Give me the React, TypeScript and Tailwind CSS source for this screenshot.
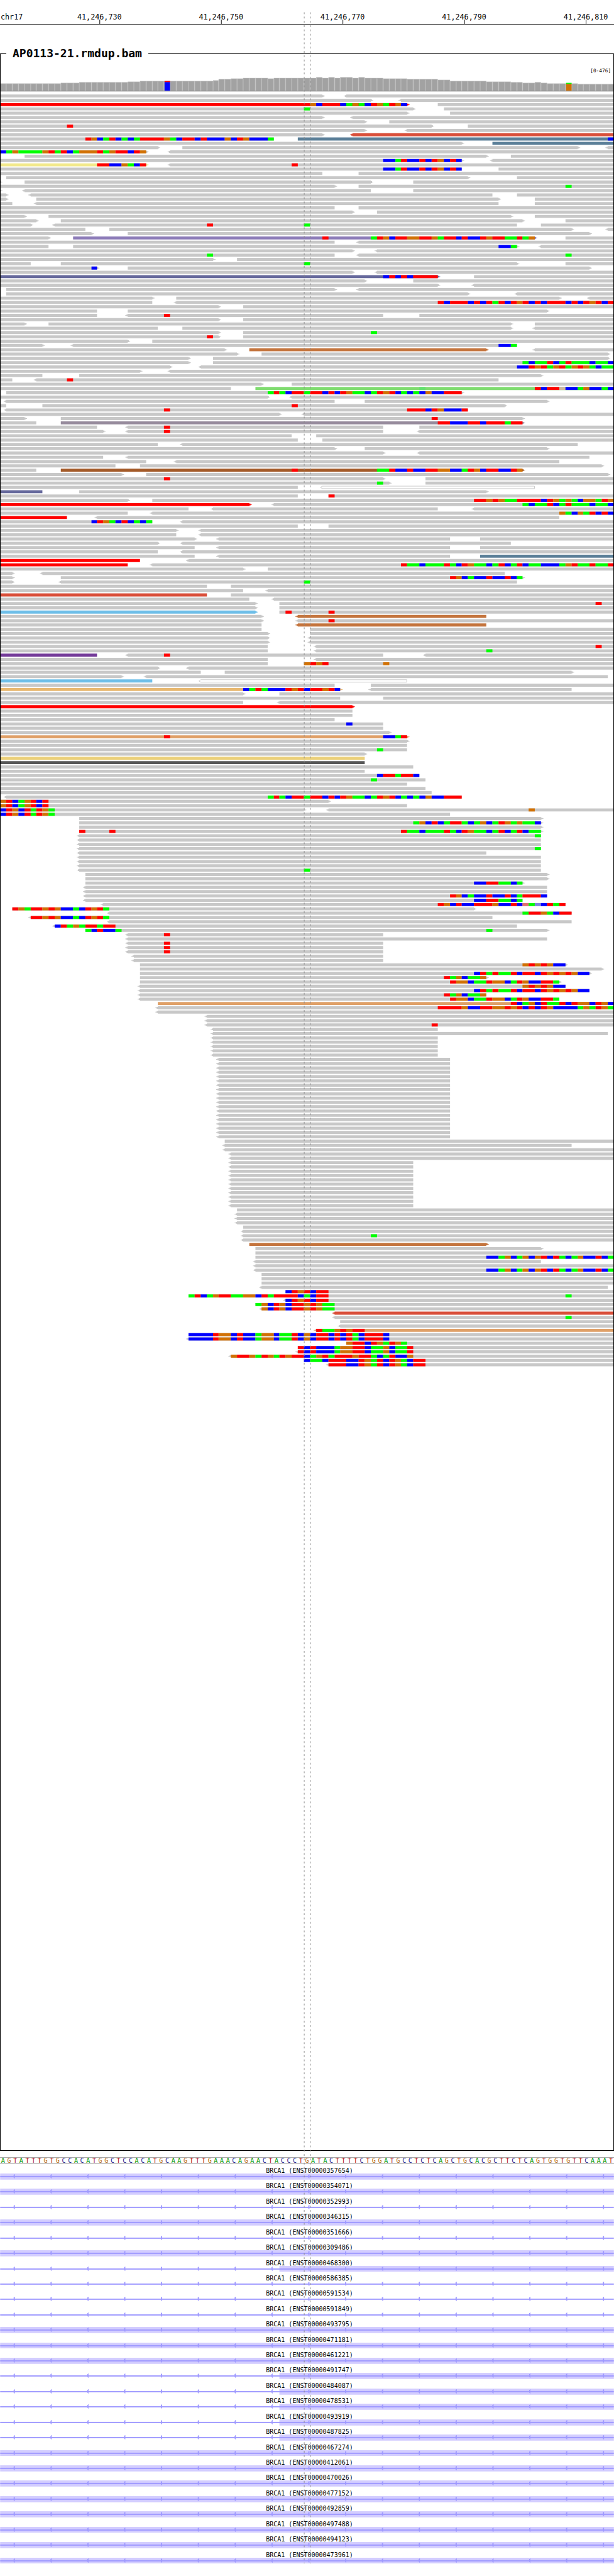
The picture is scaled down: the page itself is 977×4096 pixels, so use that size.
import React from "react";

/** Width of one reference base in plot units (the plot is 1000 units wide). */
const BASE = 9.9;
const bx = (b: number) => Math.round(b * BASE);

const GREY = "#c8c8c8";

const READ_COLORS: Record<string, string> = {
  red: "#ff0000",
  tomato: "#d94f3a",
  steel: "#5b7f98",
  khaki: "#f2e98b",
  lilac: "#8c7bb8",
  slate: "#66699c",
  copper: "#c4743d",
  green: "#80dc70",
  mauve: "#968a9c",
  brown: "#a35a28",
  sky: "#6fbfe8",
  purple: "#733a99",
  sand: "#e8b870",
  tan: "#dfa068",
  straw: "#ebd07a",
  dark: "#575757",
};

const MISMATCH_COLORS: Record<string, string> = {
  A: "#00ff00",
  C: "#0000ff",
  G: "#d17105",
  T: "#ff0000",
  a: "#64e070",
  t: "#e07070",
  c: "#8080e0",
  n: "#ccb6a0",
};

const LETTER_COLORS: Record<string, string> = {
  A: "text-[#009600]",
  C: "text-[#16168c]",
  G: "text-[#b86a10]",
  T: "text-[#b01010]",
};

const M38 = "ACAATCATAAACAAC";
const M45 = "ATACTTATTCTCTGAACATGTCACACGCCTTT";
const M37 = "CCAGCAGCGTCTACAGCCTCA";
const M55 = "CCCCTGGCTCCAGGCAATCGCTTCTCTACTTTC";
const M58 = "TCTCCCAGGTTCAAGCAAT";
const M41 = "CTATAATCTTCTGTGTGCC";
const M43 = "TGGCAATGGCATGCCTTA";

/**
 * One string per pileup row, tokens separated by spaces:
 *   start-end        a read, "<" before or ">" after for its strand arrow
 *   ...:name         read colour
 *   ~start-end       low mapping quality (hollow) read
 *   @pos=BASES       mismatching bases
 */
const ROWS: string[] = [
  "0-53> <57-101",
  "0-61> <66-101",
  "0-67>:red 72-101 @51=GCTTTCAGACTGATGC",
  "0-68> 73-101 @50=A",
  "0-67> 74-101",
  "0-53> <58-101",
  "0-60> 64-101",
  "0-71> 77-101 @11=T",
  "0-60> <67-101",
  "0-53> <58-101:tomato",
  "0-45 49-101:steel @14=TGCATCACATTTTGACTTCTCCCGCTGCCCA @100=C",
  "0-76> 81-101:steel",
  "0-26> 30-95> <100-101",
  "0-24> <28-101 @0=CAGAAAAGTATCAGGGTAGTTCTG",
  "4-80> 84-101",
  "0-76> <81-101 @63=CCATCCTCTGCTC",
  "0-24>:khaki <28-101 @16=TTCCGACT @48=T",
  "0-76 82-101 @63=CCATCCTCTGCTC",
  "0-53 59-101",
  "1-77> 85-101",
  "0-0> 4-61> 68-101",
  "0-55> 59-101 @93=A",
  "0-0> <4-61 68-101",
  "0-1> <5-81 85-101",
  "0-1> 6-82> 88-101",
  "0-2 <6-82 88-101",
  "0-55 59-101",
  "0-58> 62-101",
  "0-4> 8-84> 88-101",
  "0-6> 10-86> 93-101",
  "0-5> <9-85 89-101 @34=T @50=A",
  "0-14 18-94> <100-101",
  "0-15> 21-97>",
  "0-8> 12-88>:lilac 93-101 @53=T @61=ATGCTTGGTTGATTCTCCTGTTAATAG",
  "0-55 <59-101",
  "0-8 12-85> <89-101 @82=CCA",
  "0-58> <62-101",
  "0-55 <59-101 @34=A @93=A",
  "0-35> 39-101",
  "0-5 10-85> 93-101 @50=A",
  "0-16> 21-97> @15=C",
  "0-58> <62-101",
  "0-72>:slate 78-101 @63=CTCTCTTTT",
  "0-60> 68-101",
  "0-72> <78-101",
  "1-55> <59-101",
  "1-77> <85-101",
  "0-25> 29-92> <97-101",
  "0-25 <29-101 @72=TCTTTCTCTATCTGTCTCTTTCTCTGTCT",
  "0-36> 40-101",
  "0-16 21-90>",
  "0-16 <21-63 69-101 @27=T",
  "0-36> 40-101",
  "0-4> 8-84> 88-101",
  "0-26 30-84> <88-101",
  "0-36> 40-101 @61=A",
  "0-36> 40-101 @34=T",
  "0-21> 25-101",
  "0-7> <12-85 @82=CCA",
  "0-37> 41-80>:copper <88-101",
  "0-39> 43-100>",
  "0-31> 35-100>",
  `0-31> 35-101 @86=${M38}`,
  "0-28> <33-101 @85=CCTGTAGTAGTGACAA",
  "0-23> <28-101",
  "0-7 13-89>",
  "0-2 <6-82 @11=T",
  "0-43> 48-101",
  "0-38 42-101:green @69=a @88=TCTTnCCAGCCAC",
  `1-76> @44=${M45}`,
  "0-44> <48-101",
  "<1-55 60-90>",
  "0-1 7-83> @48=T",
  "<1-77 @27=T @67=TTTCTGCCCT",
  "0-46> <50-101",
  "0-4> 10-86> @71=T",
  "0-6 10-86>:mauve @72=TTCCCTTCTTTATT",
  "0-16 <21-63 69-101 @27=T",
  "0-17> <21-63 <69-101 @27=T",
  "0-48 52-101",
  "0-49 53-101",
  "0-26 <30-95",
  "0-55> 60-90>",
  "0-63> <69-101",
  "0-17 <21-97",
  "0-24 <29-92",
  "0-19 23-99>",
  "0-6 10-86>:brown @48=T @62=AATCCTCCTTGGCCATGCTTCCTG",
  "0-20> 24-100>",
  "0-63> 70-101 @27=T",
  "0-64> 70-101 @62=A",
  "0-49 ~<53-88",
  "0-7:slate 13-80>",
  "0-49 54-101 @54=T",
  "0-21> 25-101 @78=TTGTGAATTTTCTGAGACGGATG",
  `0-41>:red <45-101 @86=${M38}`,
  "0-31 <35-72 <78-101",
  "0-21 <25-101 @92=GACGATCTC",
  "0-11:red <16-92",
  "0-25 <30-101 @15=CTGACTCACA",
  "0-49 54-101",
  "0-29> <33-101",
  "0-29 <33-101",
  "0-32> <36-74 79-101",
  "0-26> <30-84",
  "0-32 <36-74 79-101",
  "0-26 <30-101",
  "0-32 <36-74 79-101:steel",
  "0-23:red <31-101",
  "0-21:red <25-101 @66=TAACAAATACTGAACATCATCAACCCAGTAATAAT",
  "0-40> 44-101",
  "0-2> <7-83",
  "0-2> 10-86> @74=TGCACCTCCTCA",
  "0-2> <10-85 @50=A",
  "0-34 38-101",
  "0-40 <44-101",
  "0-34:tomato 38-101",
  "0-41 <45-101",
  "0-42> 46-101 @98=T",
  "0-42> 46-101",
  "0-42>:sky 46-101 @47=T @54=T",
  "0-43> <49-80:copper",
  "0-43> <49-101 @54=T",
  "0-43 <49-80:copper",
  "0-43 51-101",
  "0-44> 51-101",
  "0-44> <51-101",
  "0-44> <51-101",
  "0-44 <52-101 @98=T",
  "0-44 <52-101 @80=A",
  "0-16:purple <21-63 <70-101 @27=T",
  "0-44 <52-101",
  "0-44 50-101 @50=GTGT @63=G",
  "0-26> <31-101",
  "0-33 37-94>",
  "0-20> <24-100",
  "0-25:sky ~<33-67",
  "0-55 61-101",
  "0-56>:sand <61-94 @40=CATACCCTGTCTTGTC",
  "0-40> 46-101",
  "0-56 63-101",
  "0-40 <46-101",
  "0-58>:red",
  "0-58",
  "0-58",
  "0-55",
  "0-63 @57=C",
  "0-63",
  "0-64>",
  "0-67>:tan @27=T @63=CCAT",
  "0-67>",
  "0-67",
  "0-67 @62=A",
  "0-60>",
  "0-60:straw",
  "0-60:dark",
  "0-68",
  "0-60",
  "0-69 @62=CTTATTC",
  "0-70 @61=A",
  "0-67",
  "0-70",
  "0-71",
  `<1-76 @44=${M45}`,
  "0-54> @0=GTCAGTCT",
  "0-67 @0=GTCAGTCT",
  "0-50> <54-101 @0=CTGCTATGA @87=G",
  "0-74 @0=CTGCTATGA",
  "13-89>",
  "13-89> @68=AGCTCATTACAGCATGAGAAC",
  "13-89>",
  "13-89> @13=T @18=T @66=TAACAAATACTGAACATCATCAA",
  "<13-89 @88=A",
  "<13-89",
  "<13-89",
  "<13-89 @88=A",
  "<13-80",
  "<13-89",
  "<13-89",
  "<13-89",
  "<13-89 @50=A",
  "14-90>",
  "14-90>",
  "14-86> @78=CCTTAACA",
  "<14-90",
  "<14-90",
  "<14-90 @74=TGCACCTCCTCATTTC",
  "<14-86 @78=CCTTAACA",
  "<17-93 @72=TGCTCCTTTGCCTCtAcCTAT",
  "2-78> @2=TGATTGTGCCACTGTA",
  "<18-94 @86=ATTGACTT",
  "<5-81 @5=TTGTGCCACTGTA",
  "<18-94",
  "<9-85 @9=CTAGATTATT",
  "14-90> @14=ACTCCA @80=A",
  "<21-63 @27=T",
  "<21-90",
  "<21-63 @27=T",
  "<21-63 @27=T",
  "<21-63 @27=T",
  "<22-63",
  "<22-63",
  "23-93> @86=GTGTGCC",
  "23-99>",
  `23-97> @78=${M41}`,
  "23-80> @73=TAGCAAG",
  `23-92> @74=${M43}`,
  "<23-93 @86=GTGTGCC",
  `<23-97 @78=${M41}`,
  "<23-80 @73=TAGCAAG",
  `<23-92 @74=${M43}`,
  "26-101:tan @84=TCAGCTAATCTGGCTGC",
  "<26-101 @72=TTTTGCCTTGGTGTCTCTGCCCCAGATGA",
  "<26-101",
  "<34-101",
  "<34-101",
  "<34-101 @71=T",
  "<35-72",
  "<35-100",
  ...Array<string>(5).fill("<35-72"),
  ...Array<string>(19).fill("<36-74"),
  "37-101",
  "<37-94",
  "<37-101",
  "<38-101",
  "<38-101",
  ...Array<string>(11).fill("<38-68"),
  "39-101",
  "<39-101",
  "<39-101",
  "<39-101",
  "40-101",
  "<40-101",
  "<40-101 @61=A",
  "<40-101",
  "41-80>:copper",
  "42-89>",
  "42-101",
  `42-101 @80=${M37}`,
  "<42-89",
  "<42-101",
  `<42-101 @80=${M37}`,
  "43-101",
  "43-101",
  "43-101",
  "<43-100",
  "47-101 @47=CTGTCTT",
  "31-101 @31=ATCAGTTAAGGCTATTTTCACTT @93=A",
  "<47-101 @47=CTGTCTT",
  "42-101 @42=AGCTGCTTGTGAA",
  "<43-101 @43=GCTGCTTGTGAA",
  "<55-101:tomato",
  "<55-101 @93=A",
  "56-101",
  "<56-101",
  "<52-101:tan @52=TAAGTGTT",
  `31-101 @31=${M55}`,
  `<31-101 @31=${M55}`,
  "57-101 @57=GTTCTGATGA",
  `49-101 @49=${M58}`,
  `<49-101 @49=${M58}`,
  "<38-101 @38=GTTGATGATGTTCAGTATTTGTTACATCCG",
  "50-101 @50=CAACTTTCCTGATCTGACTT",
  "<54-101 @54=TTTCCTGATCTGACTT",
];

type Read = {
  start: number;
  end: number;
  left: boolean;
  right: boolean;
  hollow: boolean;
  color: string;
};
type Run = { start: number; end: number; color: string };

function parseRow(row: string): { reads: Read[]; runs: Run[] } {
  const reads: Read[] = [];
  const runs: Run[] = [];
  for (const token of row.split(" ")) {
    const mm = /^@(\d+)=(\w+)$/.exec(token);
    if (mm) {
      const at = Number(mm[1]);
      const bases = mm[2];
      let i = 0;
      while (i < bases.length) {
        let j = i + 1;
        while (j < bases.length && bases[j] === bases[i]) j++;
        runs.push({ start: at + i, end: at + j, color: MISMATCH_COLORS[bases[i]] });
        i = j;
      }
      continue;
    }
    const rd = /^(~?)(<?)(\d+)-(\d+)(>?)(?::(\w+))?$/.exec(token);
    if (rd) {
      reads.push({
        hollow: rd[1] !== "",
        left: rd[2] !== "",
        start: Number(rd[3]),
        end: Number(rd[4]),
        right: rd[5] !== "",
        color: rd[6] ? READ_COLORS[rd[6]] : GREY,
      });
    }
  }
  return { reads, runs };
}

const PILE_TOP = 154;
const PITCH = 7;

function ReadShape({ read, y }: { read: Read; y: number }) {
  const x0 = bx(read.start);
  const x1 = bx(read.end);
  if (read.hollow) {
    return (
      <path
        d={`M${x0} ${y + 0.5}H${x1 - 0.5}V${y + 4.5}H${x0}L${x0 - 3} ${y + 2.5}Z`}
        fill="#ffffff"
        stroke={GREY}
      />
    );
  }
  let d = `M${x0} ${y}H${x1}`;
  d += read.right ? `v1h2v1h2v1h-2v1h-2v1` : `v5`;
  d += `H${x0}`;
  d += read.left ? `v-1h-2v-1h-2v-1h2v-1h2v-1Z` : `Z`;
  return <path d={d} fill={read.color} />;
}

function Pileup() {
  return (
    <g>
      {ROWS.map((row, i) => {
        const { reads, runs } = parseRow(row);
        const y = PILE_TOP + i * PITCH;
        return (
          <g key={i}>
            {reads.map((r, k) => (
              <ReadShape key={k} read={r} y={y} />
            ))}
            {runs.map((r, k) => (
              <rect
                key={k}
                x={bx(r.start)}
                y={y}
                width={bx(r.end) - bx(r.start)}
                height={5}
                fill={r.color}
              />
            ))}
          </g>
        );
      })}
    </g>
  );
}

/** [first base, top of bar]: each entry holds until the next one. */
const COVERAGE: [number, number][] = [
  [0, 136], [10, 135], [13, 134], [21, 133], [23, 132], [35, 131], [36, 129],
  [38, 128], [40, 127], [44, 128], [45, 127], [52, 126], [53, 127], [54, 126],
  [55, 127], [56, 126], [58, 127], [59, 126], [60, 127], [63, 128], [67, 129],
  [72, 130], [74, 132], [80, 133], [84, 134], [86, 135], [88, 134], [89, 135],
  [90, 136], [95, 137],
];

function coverageTop(base: number): number {
  let top = COVERAGE[0][1];
  for (const [b, t] of COVERAGE) if (base >= b) top = t;
  return top;
}

function Coverage() {
  const bases = Array.from({ length: 101 }, (_, b) => b);
  return (
    <g>
      {bases.map((b) => {
        const x = bx(b);
        const w = bx(b + 1) - x;
        const top = coverageTop(b);
        return (
          <g key={b}>
            <rect x={x} y={top} width={w} height={148 - top} fill="#b2b2b2" />
            <rect x={x + 1} y={top + 1} width={w - 2} height={147 - top} fill="#a2a2a2" />
          </g>
        );
      })}
      <rect x={268} y={132} width={9} height={2} fill="#ff0000" />
      <rect x={268} y={134} width={9} height={14} fill="#0000ff" />
      <rect x={922} y={135} width={9} height={2} fill="#00ff00" />
      <rect x={922} y={137} width={9} height={11} fill="#d17105" />
      <rect x={0} y={148} width={1000} height={1} fill="#7c7c7c" />
      <text
        x={995}
        y={118}
        textAnchor="end"
        className="fill-black font-['DejaVu_Sans_Mono',monospace] text-[8px]"
      >
        [0-476]
      </text>
    </g>
  );
}

const TICKS: { x: number; label: string }[] = [
  { x: 162, label: "41,246,730" },
  { x: 360, label: "41,246,750" },
  { x: 558, label: "41,246,770" },
  { x: 756, label: "41,246,790" },
  { x: 954, label: "41,246,810" },
];

function Ruler() {
  return (
    <svg viewBox="0 0 1000 76" className="block h-auto w-full" role="img" aria-label="Position ruler">
      <g className="fill-black font-['DejaVu_Sans_Mono',monospace] text-[12px]">
        <text x={1} y={32}>
          chr17
        </text>
        {TICKS.map((t) => (
          <text key={t.x} x={t.x} y={32} textAnchor="middle">
            {t.label}
          </text>
        ))}
      </g>
      {TICKS.map((t) => (
        <rect key={t.x} x={t.x} y={32} width={1} height={7} fill="#000000" />
      ))}
      <rect x={0} y={39} width={1000} height={1} fill="#000000" />
    </svg>
  );
}

const SEQUENCE =
  "AGTATTTGTGCCACATGGCTCCACATGCAAGTTTGAAACAGAACTACCCTG" +
  "ATACTTTTCTGGATGCCTCTCAGCTGCACGCTTCTCAGTGGTGTTCAAAT";

function SequenceStrip() {
  return (
    <div className="mt-[10px] flex h-[11px] items-center border-y border-[#a8a8a8] text-[10px] leading-[9px]">
      {SEQUENCE.split("").map((base, i) => (
        <span key={i} className={`min-w-0 flex-1 basis-0 text-center ${LETTER_COLORS[base]}`}>
          {base}
        </span>
      ))}
    </div>
  );
}

/** Transcript id and the x where its exon begins; null where only intron is in view. */
const TRANSCRIPTS: [string, number | null][] = [
  ["ENST00000357654", 0],
  ["ENST00000354071", 0],
  ["ENST00000352993", null],
  ["ENST00000346315", 0],
  ["ENST00000351666", null],
  ["ENST00000309486", 0],
  ["ENST00000468300", 455],
  ["ENST00000586385", null],
  ["ENST00000591534", null],
  ["ENST00000591849", null],
  ["ENST00000493795", 0],
  ["ENST00000471181", 0],
  ["ENST00000461221", 0],
  ["ENST00000491747", 455],
  ["ENST00000484087", 455],
  ["ENST00000478531", 455],
  ["ENST00000493919", 455],
  ["ENST00000487825", 455],
  ["ENST00000467274", 0],
  ["ENST00000412061", 0],
  ["ENST00000470026", 0],
  ["ENST00000477152", 0],
  ["ENST00000492859", 0],
  ["ENST00000497488", 0],
  ["ENST00000494123", 0],
  ["ENST00000473961", 0],
];

function TranscriptTrack({ id, exon }: { id: string; exon: number | null }) {
  return (
    <li className="flex aspect-[40/1] flex-col justify-end">
      <p className="pl-[8px] text-center text-[10px] leading-[8px] text-black">BRCA1 ({id})</p>
      <svg viewBox="0 0 1000 10" className="block h-auto w-full shrink-0" aria-hidden="true">
        {exon !== null && <rect x={exon} y={0} width={1000 - exon} height={10} fill="#d3cdff" />}
        <rect x={0} y={4} width={1000} height={2} fill="#9f9aff" />
        {Array.from({ length: 17 }, (_, i) => (
          <path key={i} d={`M${21 + i * 60} 4h1v-2h1v-1h1v7h-1v-1h-1v-2h-1z`} fill="#9f9aff" />
        ))}
      </svg>
    </li>
  );
}

function FocusGuides() {
  return (
    <svg
      viewBox="0 0 1000 4192"
      preserveAspectRatio="none"
      className="pointer-events-none absolute inset-0 h-full w-full"
      aria-hidden="true"
    >
      <path
        d="M495.5 20V4172M505.5 20V4172"
        fill="none"
        stroke="#8c8c8c"
        strokeWidth={1}
        strokeDasharray="3 4"
      />
    </svg>
  );
}

export default function App() {
  return (
    <main className="relative w-full bg-white pb-[19px] font-['DejaVu_Sans_Mono',monospace] text-black">
      <Ruler />
      <fieldset className="min-w-0 border border-black">
        <legend className="ml-[9px] px-[10px] text-[18px] leading-[22px] font-bold">
          AP0113-21.rmdup.bam
        </legend>
        <svg
          viewBox="1 98.5 998 3401.5"
          className="block h-auto w-full"
          role="img"
          aria-label="Coverage and aligned reads"
        >
          <Coverage />
          <Pileup />
        </svg>
      </fieldset>
      <SequenceStrip />
      <ul>
        {TRANSCRIPTS.map(([id, exon]) => (
          <TranscriptTrack key={id} id={id} exon={exon} />
        ))}
      </ul>
      <FocusGuides />
    </main>
  );
}
